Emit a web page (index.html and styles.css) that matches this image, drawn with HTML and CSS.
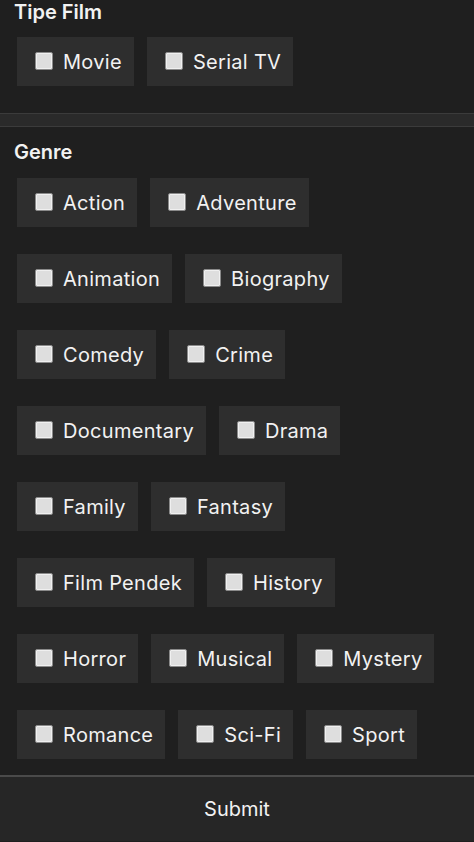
FILE: index.html
```html
<!DOCTYPE html>
<html lang="id">
<head>
    <meta charset="UTF-8">
    <meta name="viewport" content="width=device-width, initial-scale=1.0">
    <title>Filter Film</title>
    <link rel="stylesheet" href="styles.css">
</head>
<body>
    <form id="filterForm">
        <div class="section">
            <h2>Tipe Film</h2>
            <div class="options">
                <label class="chip"><input type="checkbox" name="tipe" value="movie"> Movie</label>
                <label class="chip"><input type="checkbox" name="tipe" value="tv"> Serial TV</label>
            </div>
        </div>

        <div class="divider"></div>

        <div class="section">
            <h2>Genre</h2>
            <div class="options genres">
                <label class="chip"><input type="checkbox" name="genre"> Action</label>
                <label class="chip"><input type="checkbox" name="genre"> Adventure</label>
                <label class="chip"><input type="checkbox" name="genre"> Animation</label>
                <label class="chip"><input type="checkbox" name="genre"> Biography</label>
                <label class="chip"><input type="checkbox" name="genre"> Comedy</label>
                <label class="chip"><input type="checkbox" name="genre"> Crime</label>
                <label class="chip"><input type="checkbox" name="genre"> Documentary</label>
                <label class="chip"><input type="checkbox" name="genre"> Drama</label>
                <label class="chip"><input type="checkbox" name="genre"> Family</label>
                <label class="chip"><input type="checkbox" name="genre"> Fantasy</label>
                <label class="chip"><input type="checkbox" name="genre"> Film Pendek</label>
                <label class="chip"><input type="checkbox" name="genre"> History</label>
                <label class="chip"><input type="checkbox" name="genre"> Horror</label>
                <label class="chip"><input type="checkbox" name="genre"> Musical</label>
                <label class="chip"><input type="checkbox" name="genre"> Mystery</label>
                <label class="chip"><input type="checkbox" name="genre"> Romance</label>
                <label class="chip"><input type="checkbox" name="genre"> Sci-Fi</label>
                <label class="chip"><input type="checkbox" name="genre"> Sport</label>
            </div>
        </div>

        <button type="submit" class="submit">Submit</button>
    </form>
</body>
</html>
```

FILE: styles.css
```css
html, body {
    margin: 0;
    padding: 0;
    background-color: #1f1f1f;
    color: #f2f2f2;
    font-family: Inter, "Noto Sans", sans-serif;
}
form {
    display: flex;
    flex-direction: column;
    min-height: 842px;
}
.section {
    padding: 0 14px;
}
h2 {
    font-size: 20px;
    font-weight: 600;
    line-height: 24px;
    margin: 0;
}
.options {
    display: flex;
    flex-wrap: wrap;
    column-gap: 13px;
    row-gap: 27px;
    padding-left: 3px;
    margin-top: 13px;
}
.chip {
    display: flex;
    align-items: center;
    height: 49px;
    padding: 0 12px 0 18px;
    background-color: #2e2e2e;
    font-size: 20px;
    letter-spacing: 0.3px;
    gap: 10px;
    cursor: pointer;
}
.chip input {
    appearance: none;
    -webkit-appearance: none;
    width: 18px;
    height: 18px;
    margin: 0 0 2px 0;
    background-color: #dedede;
    border: 1px solid #8a8a8a;
    border-radius: 2px;
    box-shadow: inset 0 0 0 1px #f0f0f0;
    box-sizing: border-box;
}
.divider {
    height: 12px;
    margin: 27px 0 13px;
    background-color: #2a2a2a;
    border-top: 1px solid #3b3b3b;
    border-bottom: 1px solid #3b3b3b;
}
.genres {
    margin-top: 14px;
}
.submit {
    margin-top: 16px;
    height: 66px;
    background-color: #262626;
    color: #f2f2f2;
    border: none;
    border-top: 2px solid #4a4a4a;
    font-family: Inter, "Noto Sans", sans-serif;
    font-size: 20px;
    padding-bottom: 2px;
    cursor: pointer;
}
```
